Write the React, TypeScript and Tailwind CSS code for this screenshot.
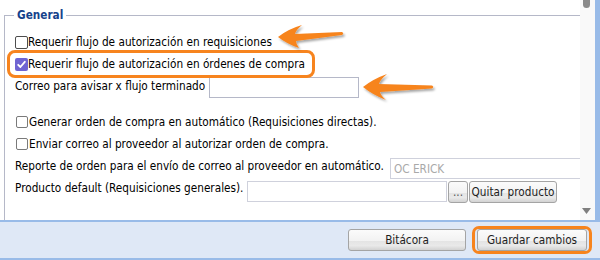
function Box({ checked = false, light = false }: { checked?: boolean; light?: boolean }) {
  if (checked) {
    return (
      <span className="inline-flex w-[13px] h-[13px] shrink-0 items-center justify-center rounded-[2px] bg-[#6f64d2]">
        <svg width="11" height="11" viewBox="0 0 11 11">
          <path d="M2.2 5.8 L4.4 8 L8.8 2.8" fill="none" stroke="#fff" strokeWidth="1.8" strokeLinecap="round" strokeLinejoin="round" />
        </svg>
      </span>
    );
  }
  return light ? (
    <span className="inline-block w-[12px] h-[12px] ml-[1px] shrink-0 rounded-[2px] border border-[#7a7a7a] bg-white" />
  ) : (
    <span className="inline-block w-[13px] h-[13px] shrink-0 rounded-[2px] border border-[#4d4d4d] bg-white" />
  );
}

const btn =
  "h-[22px] flex items-center justify-center border border-[#a4a4a4] rounded-[3px] text-[#1e1e1e] bg-[linear-gradient(to_bottom,#fbfbfb_0%,#f2f2f2_55%,#e4e4e4_56%,#e9e9e9_78%,#d2d2d2_100%)]";

function Arrow({ d, w, h }: { d: string; w: number; h: number }) {
  return (
    <svg width={w} height={h} viewBox={`0 0 ${w} ${h}`} className="overflow-visible">
      <defs>
        <filter id="sh" x="-20%" y="-30%" width="150%" height="180%">
          <feDropShadow dx="1.5" dy="2" stdDeviation="1" floodColor="#000" floodOpacity="0.35" />
        </filter>
      </defs>
      <path d={d} fill="#f7841e" filter="url(#sh)" />
    </svg>
  );
}

export default function App() {
  return (
    <div className="relative w-[600px] h-[260px] overflow-hidden bg-white text-black font-['DejaVu_Sans_Condensed','DejaVu_Sans',sans-serif] text-[11.7px] leading-[14px]">
      <div className="flex h-[220px]">
        <div className="w-[580px] overflow-hidden">
          <fieldset className="ml-[4px] mt-[8px] w-[620px] h-[240px] border border-[#b5b8c8]">
            <legend className="ml-[9px] px-[3px] leading-[14px] font-bold text-[#15428b]">General</legend>
            <div className="flex flex-col pl-[10px]">
              <div className="mt-[9px] h-[22px] flex items-center">
                <Box />
                <span>Requerir flujo de autorización en requisiciones</span>
              </div>
              <div className="h-[22px] flex items-center">
                <Box checked />
                <span>Requerir flujo de autorización en órdenes de compra</span>
              </div>
              <div className="mt-[2px] h-[22px] flex items-start">
                <span className="w-[194px] mt-[2px] shrink-0">Correo para avisar x flujo terminado</span>
                <input readOnly className="w-[150px] h-[21px] border border-[#b5b8c8] bg-white px-[3px] outline-none" />
              </div>
              <div className="mt-[12px] h-[22px] flex items-center">
                <Box light />
                <span className="ml-[1px]">Generar orden de compra en automático (Requisiciones directas).</span>
              </div>
              <div className="h-[22px] flex items-center">
                <Box light />
                <span className="ml-[1px]">Enviar correo al proveedor al autorizar orden de compra.</span>
              </div>
              <div className="mt-[3px] h-[21px] flex items-start">
                <span className="w-[375px] mt-[1px] shrink-0">Reporte de orden para el envío de correo al proveedor en automático.</span>
                <input
                  readOnly
                  value="OC ERICK"
                  className="w-[200px] h-[21px] border border-[#cfd1dc] bg-white px-[3px] text-[#a9a9a9] outline-none"
                />
              </div>
              <div className="mt-[2px] h-[21px] flex items-start">
                <span className="w-[232px] shrink-0">Producto default (Requisiciones generales).</span>
                <input readOnly className="w-[200px] h-[21px] border border-[#cfd1dc] bg-white px-[3px] outline-none" />
                <button className={`${btn} ml-[1px] w-[20px] h-[21px] text-[#555]`}>...</button>
                <button className={`${btn} ml-[1px] w-[88px] h-[21px]`}>Quitar producto</button>
              </div>
            </div>
          </fieldset>
        </div>
        <div className="w-[15px] bg-[#f9f9f9] flex flex-col justify-between pb-[6px]">
          <div className="ml-[3px] w-[7px] h-[8px] rounded-b-[4px] bg-[#8a8a8a]" />
          <svg width="9" height="6" viewBox="0 0 9 6" className="ml-[2px]">
            <path d="M0 0 H9 L4.5 6 Z" fill="#7f7f7f" />
          </svg>
        </div>
        <div className="w-[5px] bg-[#99bbe8]" />
      </div>
      <div className="h-[40px] border-y-2 border-[#99bbe8] bg-[#dfe8f6] flex items-center justify-end pr-[8px]">
        <button className={`${btn} w-[118px]`}>Bitácora</button>
        <div className="ml-[6px] border-[3px] border-[#f7841e] rounded-[7px] px-[2px]">
          <button className={`${btn} w-[110px]`}>Guardar cambios</button>
        </div>
      </div>

      {/* annotations */}
      <div className="absolute left-[7px] top-[50px] w-[308px] h-[28px] border-[3px] border-[#f7841e] rounded-[8px]" />
      <div className="absolute left-[276px] top-[22px]">
        <Arrow w={68} h={27} d="M2 15 Q12 7 26 3 Q20 8 19 12 L66 10 Q68.5 11.5 66 13 L20 19 Q20 22 23 26 Q11 22 2 15 Z" />
      </div>
      <div className="absolute left-[363px] top-[73px]">
        <Arrow w={71} h={28} d="M0 14 Q10 6 24 1 Q17 7 16 11 L69 12.5 Q71.5 14 69 15.5 L17 19 Q18 23 23 27 Q10 22 0 14 Z" />
      </div>
    </div>
  );
}
